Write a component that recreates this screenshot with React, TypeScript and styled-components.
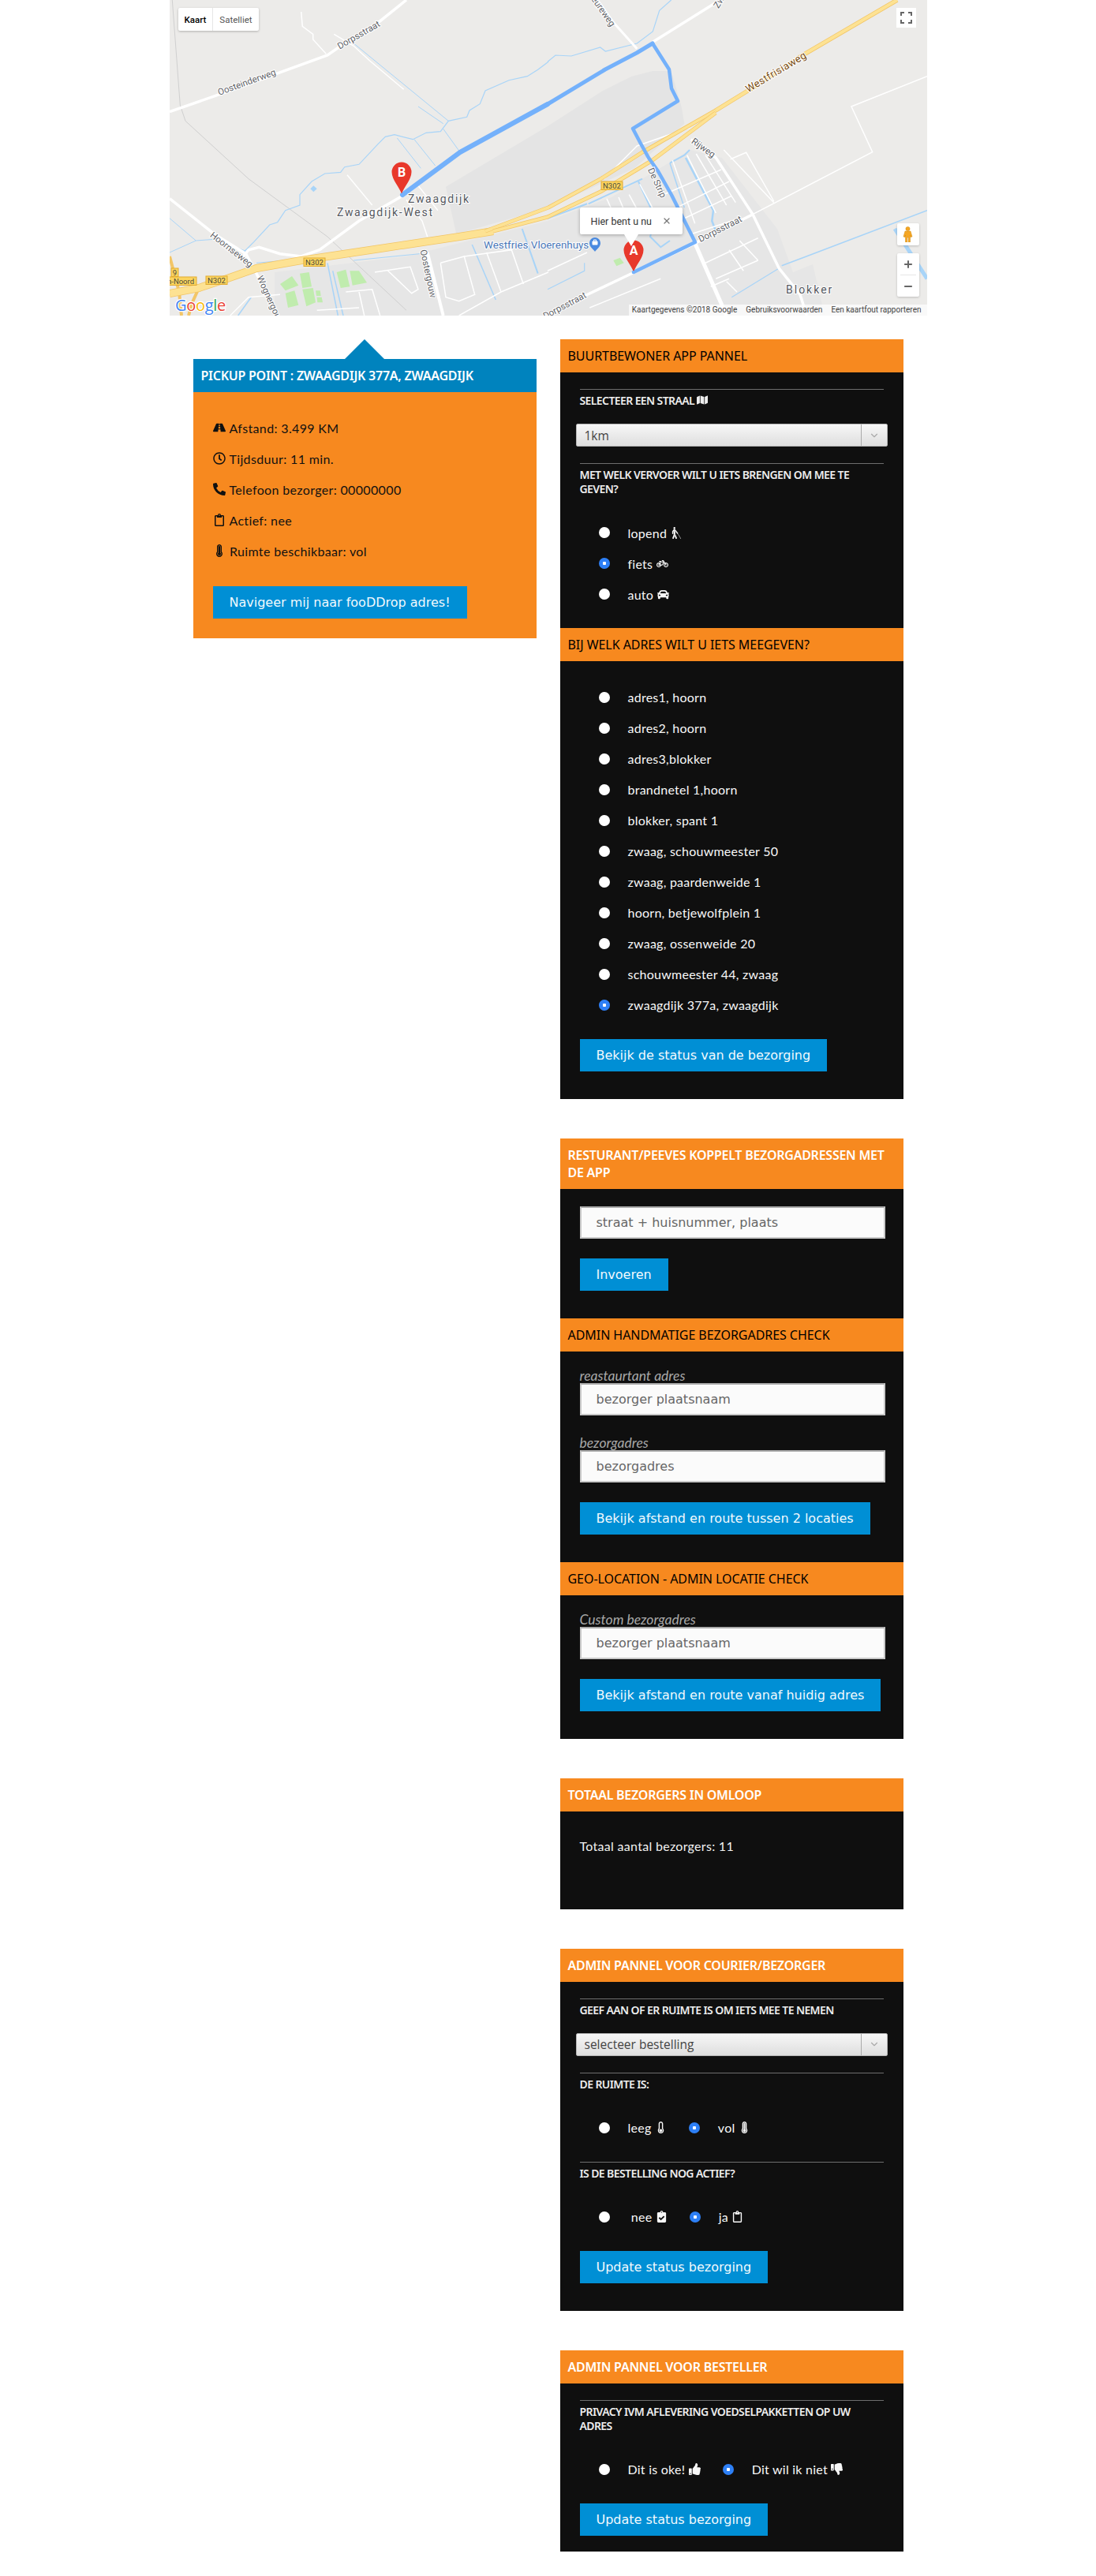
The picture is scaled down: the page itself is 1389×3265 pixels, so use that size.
import React from 'react'
import styled, { createGlobalStyle } from 'styled-components'
import {
  FaBicycle,
  FaBlind,
  FaCar,
  FaClipboardCheck,
  FaMap,
  FaPhoneAlt,
  FaRegClipboard,
  FaRegClock,
  FaRoad,
  FaThermometerEmpty,
  FaThermometerFull,
  FaThumbsDown,
  FaThumbsUp
} from 'react-icons/fa'
import { ChevronDown, Minus, Plus, X } from 'lucide-react'

const ORANGE = '#f7891f'
const BLUE = '#008fd5'
const PANEL = '#0f0f0f'
const BODY_FONT = '"Lato", "Open Sans", sans-serif'
const HEAD_FONT = '"Noto Sans", "Open Sans", sans-serif'
const BUTTON_FONT = '"DejaVu Sans", "Liberation Sans", sans-serif'
const MAP_FONT = 'Roboto, "Liberation Sans", sans-serif'

const GlobalStyle = createGlobalStyle`
  html, body {
    margin: 0;
    padding: 0;
    background: #fff;
  }
  * {
    box-sizing: border-box;
  }
`

// map data was measured on two 3x crops of the map, so points go through these
const convert = (points: string, offset: number) =>
  points
    .split(' ')
    .map(p => {
      const [x, y] = p.split(',').map(Number)
      return `${(x / 3 + offset).toFixed(1)},${(y / 3).toFixed(1)}`
    })
    .join(' ')
const L = (points: string) => convert(points, 0)
const R = (points: string) => convert(points, 479)

const whiteRoads: [string, number][] = [
  [L('0,425 200,355 600,210 650,175 800,80 900,0'), 3.5],
  [L('0,755 170,890 290,965 330,1040 410,1200'), 3.5],
  [L('885,745 720,840 570,950 500,975 420,965 340,940 300,950 280,975'), 3.5],
  [R('400,160 640,10 660,0'), 3.5],
  [R('190,0 250,85 340,185'), 3],
  [R('0,1200 130,1130 330,1035 560,925 780,815'), 3.5],
  [R('545,530 640,600 780,815 880,1020 960,1120 985,1200'), 3.5],
  [R('560,925 680,1200'), 5],
  [L('980,960 1040,1200'), 4]
]

const thinRoads: string[] = [
  L('500,45 505,100 545,130 545,150 595,205'),
  L('625,130 700,175 760,230 890,340'),
  L('675,665 770,780'),
  L('900,760 960,840 980,900'),
  L('940,700 1020,800'),
  L('1030,1000 1120,975 1160,1120 1100,1145 1050,1130 1030,1000'),
  L('780,1035 915,1015 945,1100 920,1115 830,1030'),
  L('1120,975 1300,950 1345,1080'),
  L('1100,1200 1260,1110 1440,1035'),
  L('670,1110 770,1100 800,1200'),
  L('720,1110 740,1200'),
  L('560,1180 720,1170'),
  L('230,1200 300,1130 420,1120'),
  L('1205,960 1260,1110'),
  R('780,815 1235,578 1155,405 1443,290'),
  R('475,610 560,850'),
  R('530,590 640,810'),
  R('565,585 680,780'),
  R('600,590 715,770'),
  R('440,740 660,645'),
  R('490,790 690,690'),
  R('520,830 700,745'),
  R('545,890 730,830'),
  R('225,755 280,880'),
  R('270,750 330,890'),
  R('310,740 375,860'),
  R('350,700 420,830'),
  R('600,1000 800,905'),
  R('640,1060 800,990'),
  R('690,950 745,1030'),
  R('730,915 800,990'),
  R('160,1170 430,1060'),
  R('620,1090 690,1060'),
  R('680,1070 720,1110'),
  R('670,570 860,770'),
  R('695,605 755,580 860,765'),
  R('215,680 340,555 540,485'),
  R('0,1030 150,960')
]

const waterLines: [string, number][] = [
  [L('280,960 320,920 380,855 410,845 440,800 495,780 495,740 540,690 590,660 650,655 665,635 720,625 790,550 820,520 855,512 925,530 975,505 1030,500 1060,460 1130,445 1140,420 1180,395 1200,345 1290,305 1360,290 1400,265 1440,235'), 1.2],
  [R('0,235 30,210 90,213 200,180 220,195 340,165 400,120 425,40 470,0'), 1.2],
  [L('700,165 1060,460'), 1],
  [L('945,405 1040,470'), 1],
  [L('1040,490 1105,580'), 1],
  [L('865,525 955,640'), 1],
  [L('930,530 1010,630'), 1],
  [L('0,960 100,915 170,910 290,955'), 1],
  [L('0,830 100,915'), 1],
  [L('600,1000 640,1200'), 1.5],
  [L('1150,930 1240,1140'), 1.5],
  [L('1340,870 1400,1040'), 2],
  [L('330,1000 500,985'), 1],
  [L('700,990 950,965'), 1],
  [L('310,1130 260,1200'), 1.5],
  [L('620,1030 660,1200'), 1.5],
  [R('890,1010 970,980 1443,800'), 1.5],
  [R('1320,870 1443,1060'), 5],
  [R('700,1130 880,1020'), 1.2],
  [R('465,620 520,590 540,570'), 2],
  [R('465,620 520,790'), 1.5],
  [R('525,600 630,800 625,840 640,880'), 2.5],
  [R('345,690 410,830 390,900 430,940 465,915'), 2],
  [R('155,775 360,680'), 2],
  [R('0,830 150,775'), 2],
  [R('0,1100 140,1030 140,1000'), 1.2],
  [R('640,600 780,815 880,1020'), 1]
]

const greenSpots: string[] = [
  L('420,1080 465,1050 490,1085 440,1105'),
  L('495,1040 530,1035 540,1090 505,1095'),
  L('440,1115 475,1105 490,1160 450,1170'),
  L('505,1100 545,1095 555,1150 520,1165'),
  L('555,1105 572,1105 575,1125 558,1125'),
  L('560,1130 578,1130 582,1150 562,1150'),
  L('635,1035 670,1025 685,1090 650,1095'),
  L('685,1030 720,1030 750,1075 695,1085'),
  R('250,990 275,980 290,1000 262,1012')
]

const mapLabels: { text: string; x: number; y: number; angle: number }[] = [
  { text: 'Oosteinderweg', x: 98, y: 105, angle: -20 },
  { text: 'Dorpsstraat', x: 240, y: 45, angle: -30 },
  { text: 'Hoornseweg', x: 78, y: 317, angle: 38 },
  { text: 'Wognergouw', x: 127, y: 381, angle: 66 },
  { text: 'Oostergouw', x: 327, y: 347, angle: 78 },
  { text: 'De Strip', x: 617, y: 232, angle: 65 },
  { text: 'Rijweg', x: 676, y: 188, angle: 35 },
  { text: 'Dorpsstraat', x: 698, y: 291, angle: -27 },
  { text: 'Dorpsstraat', x: 501, y: 388, angle: -28 },
  { text: 'eureweg', x: 549, y: 15, angle: 55 },
  { text: 'Zw', x: 697, y: 3, angle: -58 }
]

const shields: { text: string; x: number; y: number; w: number }[] = [
  { text: 'N302', x: 170, y: 327, w: 27 },
  { text: 'N302', x: 46, y: 350, w: 27 },
  { text: 'N302', x: 547, y: 230, w: 27 },
  { text: 'n-Noord', x: -6, y: 351, w: 40 },
  { text: '9', x: 2, y: 340, w: 9 }
]

const pinPath = (cx: number, cy: number) =>
  `M${cx} ${cy + 28}C${cx - 2} ${cy + 20} ${cx - 12.5} ${cy + 10} ${cx - 12.5} ${cy}A12.5 12.5 0 1 1 ${cx + 12.5} ${cy}C${cx + 12.5} ${cy + 10} ${cx + 2} ${cy + 20} ${cx} ${cy + 28}Z`

const addresses = [
  'adres1, hoorn',
  'adres2, hoorn',
  'adres3,blokker',
  'brandnetel 1,hoorn',
  'blokker, spant 1',
  'zwaag, schouwmeester 50',
  'zwaag, paardenweide 1',
  'hoorn, betjewolfplein 1',
  'zwaag, ossenweide 20',
  'schouwmeester 44, zwaag',
  'zwaagdijk 377a, zwaagdijk'
]

const RouteMap = () => (
  <MapFrame>
    <MapCanvas viewBox="0 0 960 400" width="960" height="400">
      <rect width="960" height="400" fill="#ecebe9" />
      <polygon
        fill="#e4e4e4"
        points={`${L('1050,710 1090,890 1440,790')} ${R('330,640 520,470 510,410 470,270 400,270 320,290 210,345 0,480')}`}
      />
      <polygon
        fill="#e6e6e6"
        points="133,345 300,325 479,280 560,250 660,190 700,200 770,290 790,345 815,335 830,400 133,400"
      />
      {greenSpots.map(p => (
        <polygon key={p} points={p} fill="#c0ecae" />
      ))}
      <polyline
        points={L('10,0 40,400 60,460 300,680 600,900 900,1180')}
        fill="none"
        stroke="#cfcfcf"
        strokeWidth="1"
      />
      {waterLines.map(([p, w]) => (
        <polyline key={p} points={p} fill="none" stroke="#a8d4f8" strokeWidth={w} />
      ))}
      <polygon points={L('535,718 547,706 560,718 547,730')} fill="#a8d4f8" />
      {thinRoads.map(p => (
        <polyline key={p} points={p} fill="none" stroke="#fff" strokeWidth="1.5" />
      ))}
      {whiteRoads.map(([p, w]) => (
        <polyline key={p} points={p} fill="none" stroke="#fff" strokeWidth={w} />
      ))}

      <g fill="none" strokeLinejoin="round">
        <polyline points="0,325 12,370 15,400" stroke="#f3c667" strokeWidth="4" />
        <polyline points="37,365 28,385 24,400" stroke="#f3c667" strokeWidth="4" />
        <polyline points="0,372 37,365 73,353 110,340 167,330 267,315 367,300 410,293" stroke="#f2c566" strokeWidth="10" />
        <polyline points="0,372 37,365 73,353 110,340 167,330 267,315 367,300 410,293" stroke="#fde293" strokeWidth="8.5" />
        <polyline points="400,293 480,263 546,227 599,193 692,140" stroke="#f2c566" strokeWidth="5" />
        <polyline points="400,293 480,263 546,227 599,193 692,140" stroke="#fde293" strokeWidth="3.6" />
        <polyline points="410,293 479,275 546,243 612,203 692,143" stroke="#f2c566" strokeWidth="5" />
        <polyline points="410,293 479,275 546,243 612,203 692,143" stroke="#fde293" strokeWidth="3.6" />
        <polyline points="692,140 736,113 802,70 922,0" stroke="#f2c566" strokeWidth="5.5" />
        <polyline points="692,140 736,113 802,70 922,0" stroke="#fde293" strokeWidth="4" />
      </g>

      <g fill="none" stroke="#74b1fb" strokeLinejoin="round" strokeLinecap="round">
        <polyline points="295,247 368,193 479,132" strokeWidth="6" />
        <polyline points="479,132 552,88 592,67 612,55" strokeWidth="5" />
        <polyline points="612,55 633,88 636,112 644,128 587,163 597,182 607,200 619,217 636,247 666,307 588,345" strokeWidth="4.5" />
      </g>

      <g fontFamily={MAP_FONT} fontSize="11.5" fill="#5f6368" stroke="#fff" strokeWidth="2" paintOrder="stroke" textAnchor="middle">
        {mapLabels.map(l => (
          <text
            key={`${l.text}${l.x}`}
            x={l.x}
            y={l.y}
            dominantBaseline="middle"
            transform={`rotate(${l.angle} ${l.x} ${l.y})`}
          >
            {l.text}
          </text>
        ))}
        <text
          x="769"
          y="92"
          fill="#7a4d12"
          fontSize="13"
          letterSpacing="0.4"
          dominantBaseline="middle"
          transform="rotate(-31 769 92)"
        >
          Westfrisiaweg
        </text>
      </g>

      <g fontFamily={MAP_FONT} fill="#55585e" stroke="#fff" strokeWidth="2" paintOrder="stroke" fontSize="14">
        <text x="302" y="257" letterSpacing="1.7">Zwaagdijk</text>
        <text x="212" y="274" letterSpacing="1.7">Zwaagdijk-West</text>
        <text x="781" y="372" letterSpacing="2">Blokker</text>
      </g>

      <text x="398" y="315" fontFamily={MAP_FONT} fontSize="13.4" fill="#4a77b8" stroke="#fff" strokeWidth="2" paintOrder="stroke">
        Westfries Vloerenhuys
      </text>
      <path d="M539 319c-2-3-7-6-7-11a7 7 0 0 1 14 0c0 5-5 8-7 11z" fill="#4a8ae0" />
      <rect x="535.5" y="305.5" width="7" height="5" rx="1" fill="#fff" />
      <path d="M537.5 305.5v-1.500h3v1.500" fill="none" stroke="#fff" />

      {shields.map(s => (
        <g key={`${s.text}${s.x}`}>
          <rect x={s.x} y={s.y} width={s.w} height="10.500" fill="#fbd45f" stroke="#e0aa30" />
          <text
            x={s.x + s.w / 2}
            y={s.y + 9}
            fontFamily={MAP_FONT}
            fontSize="9.500"
            textAnchor="middle"
            fill="#4a4a3a"
          >
            {s.text}
          </text>
        </g>
      ))}

      <path d={pinPath(294, 218)} fill="#e8382b" />
      <circle cx="295" cy="247" r="2.500" fill="#74b1fb" />
      <text x="294" y="224" fontFamily={MAP_FONT} fontWeight="700" fontSize="16" fill="#fff" textAnchor="middle">
        B
      </text>
      <path d={pinPath(588, 317)} fill="#e8382b" />
      <circle cx="588" cy="345" r="2" fill="#74b1fb" />
      <text x="588" y="323" fontFamily={MAP_FONT} fontWeight="700" fontSize="16" fill="#fff" textAnchor="middle">
        A
      </text>

      <text x="7" y="394" fontFamily='"Open Sans", sans-serif' fontSize="20" stroke="#fff" strokeWidth="2.500" paintOrder="stroke" letterSpacing="-0.3">
        <tspan fill="#4285f4">G</tspan>
        <tspan fill="#ea4335">o</tspan>
        <tspan fill="#fbbc05">o</tspan>
        <tspan fill="#4285f4">g</tspan>
        <tspan fill="#34a853">l</tspan>
        <tspan fill="#ea4335">e</tspan>
      </text>
    </MapCanvas>

    <MapTypeToggle>
      <MapTypeOption $active>Kaart</MapTypeOption>
      <MapTypeOption>Satelliet</MapTypeOption>
    </MapTypeToggle>

    <FullscreenButton>
      <svg width="15" height="15" viewBox="0 0 15 15" fill="none" stroke="#666" strokeWidth="2">
        <path d="M1 5V1h4M10 1h4v4M14 10v4h-4M5 14H1v-4" />
      </svg>
    </FullscreenButton>

    <InfoPopup>
      Hier bent u nu
      <X size={12} color="#777" strokeWidth={2.5} />
    </InfoPopup>

    <PegmanButton>
      <svg width="13" height="20" viewBox="0 0 13 20" fill="#f5a623" stroke="#d18a10" strokeWidth="0.5">
        <circle cx="6.500" cy="3" r="2.600" />
        <path d="M3 6h7l2 7-2 .5-.5-2.500V20H7.200v-6H5.800v6H3.500v-9L3 13.500 1 13z" />
      </svg>
    </PegmanButton>

    <ZoomControl>
      <ZoomStep>
        <Plus size={14} color="#666" strokeWidth={3.5} />
      </ZoomStep>
      <ZoomDivider />
      <ZoomStep>
        <Minus size={14} color="#666" strokeWidth={3.5} />
      </ZoomStep>
    </ZoomControl>

    <Attribution>
      <span>Kaartgegevens ©2018 Google</span>
      <span>Gebruiksvoorwaarden</span>
      <span>Een kaartfout rapporteren</span>
    </Attribution>
  </MapFrame>
)

const Choice = ({
  checked,
  name,
  children
}: {
  checked?: boolean
  name: string
  children: React.ReactNode
}) => (
  <ChoiceLabel>
    <Radio type="radio" name={name} defaultChecked={checked} />
    <span>{children}</span>
  </ChoiceLabel>
)

const StyledSelect = ({ value }: { value: string }) => (
  <SelectBox>
    <SelectField defaultValue={value}>
      <option>{value}</option>
    </SelectField>
    <SelectArrow>
      <ChevronDown size={14} color="#aaa" />
    </SelectArrow>
  </SelectBox>
)

export default function App() {
  return (
    <>
      <GlobalStyle />
      <RouteMap />
      <Columns>
        <PickupCard>
          <PanelHeader $light $blue>
            Pickup point : Zwaagdijk 377a, Zwaagdijk
          </PanelHeader>
          <PickupBody>
            <InfoRow><FaRoad /> Afstand: 3.499 KM</InfoRow>
            <InfoRow><FaRegClock /> Tijdsduur: 11 min.</InfoRow>
            <InfoRow><FaPhoneAlt /> Telefoon bezorger: 00000000</InfoRow>
            <InfoRow><FaRegClipboard /> Actief: nee</InfoRow>
            <InfoRow><FaThermometerFull /> Ruimte beschikbaar: vol</InfoRow>
            <ActionButton>Navigeer mij naar fooDDrop adres!</ActionButton>
          </PickupBody>
        </PickupCard>

        <RightColumn>
          <Panel>
            <PanelHeader>Buurtbewoner app pannel</PanelHeader>
            <PanelBody $pad={23}>
              <Rule />
              <FieldTitle>
                Selecteer een straal <FaMap />
              </FieldTitle>
              <StyledSelect value="1km" />
              <Rule />
              <FieldTitle>Met welk vervoer wilt u iets brengen om mee te geven?</FieldTitle>
              <ChoiceList>
                <Choice name="transport">lopend <FaBlind /></Choice>
                <Choice name="transport" checked>fiets <FaBicycle /></Choice>
                <Choice name="transport">auto <FaCar /></Choice>
              </ChoiceList>
            </PanelBody>
            <PanelHeader>Bij welk adres wilt u iets meegeven?</PanelHeader>
            <PanelBody $pad={35}>
              <ChoiceList>
                {addresses.map((address, i) => (
                  <Choice key={address} name="address" checked={i === addresses.length - 1}>
                    {address}
                  </Choice>
                ))}
              </ChoiceList>
              <ActionButton>Bekijk de status van de bezorging</ActionButton>
            </PanelBody>
          </Panel>

          <Panel>
            <PanelHeader $light>Resturant/peeves koppelt bezorgadressen met de app</PanelHeader>
            <PanelBody $pad={35}>
              <TextField $first placeholder="straat + huisnummer, plaats" />
              <ActionButton>Invoeren</ActionButton>
            </PanelBody>
            <PanelHeader>Admin handmatige bezorgadres check</PanelHeader>
            <PanelBody $pad={35}>
              <FieldCaption $first>reastaurtant adres</FieldCaption>
              <TextField placeholder="bezorger plaatsnaam" />
              <FieldCaption>bezorgadres</FieldCaption>
              <TextField placeholder="bezorgadres" />
              <ActionButton>Bekijk afstand en route tussen 2 locaties</ActionButton>
            </PanelBody>
            <PanelHeader>Geo-location - admin locatie check</PanelHeader>
            <PanelBody $pad={35}>
              <FieldCaption $first>Custom bezorgadres</FieldCaption>
              <TextField placeholder="bezorger plaatsnaam" />
              <ActionButton>Bekijk afstand en route vanaf huidig adres</ActionButton>
            </PanelBody>
          </Panel>

          <Panel>
            <PanelHeader $light>Totaal bezorgers in omloop</PanelHeader>
            <PanelBody $pad={70}>
              <TotalLine>Totaal aantal bezorgers: 11</TotalLine>
            </PanelBody>
          </Panel>

          <Panel>
            <PanelHeader $light>Admin pannel voor courier/bezorger</PanelHeader>
            <PanelBody $pad={35}>
              <Rule />
              <FieldTitle>Geef aan of er ruimte is om iets mee te nemen</FieldTitle>
              <StyledSelect value="selecteer bestelling" />
              <Rule />
              <FieldTitle>De ruimte is:</FieldTitle>
              <ChoiceList $inline>
                <Choice name="space">leeg <FaThermometerEmpty /></Choice>
                <Choice name="space" checked>vol <FaThermometerFull /></Choice>
              </ChoiceList>
              <Rule />
              <FieldTitle>Is de bestelling nog actief?</FieldTitle>
              <ChoiceList $inline>
                <Choice name="active">&nbsp;nee <FaClipboardCheck /></Choice>
                <Choice name="active" checked>ja <FaRegClipboard /></Choice>
              </ChoiceList>
              <ActionButton>Update status bezorging</ActionButton>
            </PanelBody>
          </Panel>

          <Panel>
            <PanelHeader $light>Admin pannel voor besteller</PanelHeader>
            <PanelBody $pad={20}>
              <Rule />
              <FieldTitle>Privacy ivm aflevering voedselpakketten op uw adres</FieldTitle>
              <ChoiceList $inline>
                <Choice name="privacy">Dit is oke! <FaThumbsUp /></Choice>
                <Choice name="privacy" checked>Dit wil ik niet <FaThumbsDown /></Choice>
              </ChoiceList>
              <ActionButton>Update status bezorging</ActionButton>
            </PanelBody>
          </Panel>
        </RightColumn>
      </Columns>
    </>
  )
}

const MapFrame = styled.div`
  position: relative;
  width: 960px;
  height: 400px;
  margin: 0 auto;
  overflow: hidden;
  font-family: ${MAP_FONT};
`

const MapCanvas = styled.svg`
  display: block;
`

const MapTypeToggle = styled.div`
  position: absolute;
  top: 10px;
  left: 11px;
  display: flex;
  height: 29px;
  background: #fff;
  border-radius: 2px;
  box-shadow: 0 1px 3px rgba(0, 0, 0, 0.25);
`

const MapTypeOption = styled.div<{ $active?: boolean }>`
  display: flex;
  align-items: center;
  padding: 0 8px;
  font-size: 11.500px;
  color: ${props => (props.$active ? '#000' : '#565656')};
  font-weight: ${props => (props.$active ? 500 : 400)};
  border-right: ${props => (props.$active ? '1px solid #e6e6e6' : 'none')};
`

const FullscreenButton = styled.div`
  position: absolute;
  top: 10px;
  right: 14px;
  display: flex;
  align-items: center;
  justify-content: center;
  width: 25px;
  height: 25px;
  background: #fff;
`

const InfoPopup = styled.div`
  position: absolute;
  top: 263px;
  left: 520px;
  display: flex;
  align-items: center;
  justify-content: space-between;
  width: 130px;
  height: 34px;
  padding: 0 14px;
  background: #fff;
  border-radius: 2px;
  box-shadow: 0 1px 4px rgba(0, 0, 0, 0.3);
  font-size: 12.500px;
  color: #333;

  &::after {
    content: '';
    position: absolute;
    top: 34px;
    left: 56px;
    border-left: 9px solid transparent;
    border-right: 9px solid transparent;
    border-top: 15px solid #fff;
  }
`

const PegmanButton = styled.div`
  position: absolute;
  top: 283px;
  right: 10px;
  display: flex;
  align-items: center;
  justify-content: center;
  width: 28px;
  height: 28px;
  background: #fff;
  border-radius: 2px;
  box-shadow: 0 1px 3px rgba(0, 0, 0, 0.2);
`

const ZoomControl = styled.div`
  position: absolute;
  top: 321px;
  right: 10px;
  width: 28px;
  height: 55px;
  padding: 0 4px;
  background: #fff;
  border-radius: 2px;
  box-shadow: 0 1px 3px rgba(0, 0, 0, 0.2);
`

const ZoomStep = styled.div`
  display: flex;
  align-items: center;
  justify-content: center;
  height: 27px;
`

const ZoomDivider = styled.div`
  height: 1px;
  background: #e6e6e6;
`

const Attribution = styled.div`
  position: absolute;
  right: 0;
  bottom: 0;
  display: flex;
  gap: 11px;
  height: 14px;
  padding: 0 7px 0 4px;
  background: rgba(255, 255, 255, 0.7);
  font-size: 10px;
  line-height: 14px;
  color: #444;
  white-space: nowrap;
`

const Columns = styled.div`
  display: grid;
  grid-template-columns: 435px 435px;
  justify-content: center;
  column-gap: 30px;
  align-items: start;
  padding: 30px 0;
`

const RightColumn = styled.div`
  display: flex;
  flex-direction: column;
  gap: 50px;
`

const PickupCard = styled.section`
  position: relative;
  margin-top: 25px;

  &::before {
    content: '';
    position: absolute;
    top: -25px;
    left: 192px;
    border-left: 25px solid transparent;
    border-right: 25px solid transparent;
    border-bottom: 25px solid #0083be;
  }
`

const PanelHeader = styled.h3<{ $light?: boolean; $blue?: boolean }>`
  margin: 0;
  padding: 10px 10px;
  background: ${props => (props.$blue ? '#0083be' : ORANGE)};
  color: ${props => (props.$light ? '#fff' : '#000')};
  font-family: ${HEAD_FONT};
  font-size: 16px;
  font-weight: ${props => (props.$light ? 600 : 400)};
  line-height: 22px;
  text-transform: uppercase;
  letter-spacing: ${props => (props.$light ? '-0.25px' : '-0.05px')};
`

const PickupBody = styled.div`
  padding: 25.500px 25px 25px;
  background: ${ORANGE};
`

const InfoRow = styled.p`
  display: flex;
  align-items: center;
  gap: 1px;
  height: 39px;
  margin: 0;
  font-family: ${BODY_FONT};
  font-size: 16px;
  color: #111;
  white-space: pre;
  letter-spacing: 0.35px;

  svg {
    font-size: 16px;
    flex: none;
  }
`

const ActionButton = styled.button`
  display: block;
  height: 41px;
  margin: 25px 0 0;
  padding: 0 21px;
  border: none;
  border-radius: 0;
  background: ${BLUE};
  color: #f2f9fd;
  font-family: ${BUTTON_FONT};
  font-size: 16px;
  white-space: nowrap;
`

const Panel = styled.section`
  background: ${PANEL};
`

const PanelBody = styled.div<{ $pad: number }>`
  padding: 0 25px ${props => props.$pad}px;
`

const Rule = styled.hr`
  height: 1px;
  margin: 21px 0 0;
  border: none;
  background: #6e6e6e;
`

const FieldTitle = styled.h4`
  margin: 5px 0 0;
  font-family: ${HEAD_FONT};
  font-size: 14px;
  font-weight: 600;
  line-height: 18px;
  color: #eee;
  text-transform: uppercase;
  letter-spacing: -0.6px;

  svg {
    vertical-align: -1px;
  }
`

const SelectBox = styled.div`
  display: flex;
  width: 395px;
  height: 29px;
  margin: 20px 0 0 -5px;
  border: 1px solid #b5b5b5;
  border-radius: 2px;
  background: linear-gradient(#f7f7f7, #dedede);
`

const SelectField = styled.select`
  flex: 1;
  min-width: 0;
  padding: 0 10px;
  border: none;
  outline: none;
  appearance: none;
  background: transparent;
  font-family: "Open Sans", sans-serif;
  font-size: 15.500px;
  color: #444;
`

const SelectArrow = styled.div`
  display: flex;
  align-items: center;
  justify-content: center;
  width: 33px;
  border-left: 1px solid #aaa;
`

const ChoiceList = styled.div<{ $inline?: boolean }>`
  display: flex;
  flex-direction: ${props => (props.$inline ? 'row' : 'column')};
  gap: ${props => (props.$inline ? '28px' : '0')};
  margin-top: 26.500px;
  padding-left: 24px;

  & + hr,
  & + button {
    margin-top: 23.500px;
  }
`

const ChoiceLabel = styled.label`
  display: flex;
  align-items: center;
  gap: 23px;
  height: 39px;
  font-family: ${BODY_FONT};
  font-size: 16px;
  color: #f8f8f8;
  white-space: pre;
  letter-spacing: 0.25px;

  span {
    display: flex;
    align-items: center;
    white-space: pre;
  }

  svg {
    font-size: 15px;
  }
`

const Radio = styled.input`
  appearance: none;
  flex: none;
  width: 14px;
  height: 14px;
  margin: 0;
  border-radius: 50%;
  background: #fff;

  &:checked {
    background: radial-gradient(circle, #fff 0 2px, #2d7ff5 2.500px);
  }
`

const TextField = styled.input<{ $first?: boolean }>`
  display: block;
  width: 387px;
  height: 41px;
  margin-top: ${props => (props.$first ? '22px' : '0')};
  padding: 0 19px;
  border: 2px solid #c9c9c9;
  border-top-color: #aaa;
  border-radius: 0;
  outline: none;
  background: #fbfbfb;
  font-family: ${BUTTON_FONT};
  font-size: 16px;

  &::placeholder {
    color: #666;
    opacity: 1;
  }
`

const FieldCaption = styled.label<{ $first?: boolean }>`
  display: block;
  height: 19px;
  margin-top: ${props => (props.$first ? '21px' : '25px')};
  font-family: ${BODY_FONT};
  font-size: 17.500px;
  font-style: italic;
  line-height: 19px;
  color: #a8a8a8;
`

const TotalLine = styled.p`
  margin: 34px 0 0;
  font-family: ${BODY_FONT};
  font-size: 16px;
  line-height: 20px;
  letter-spacing: 0.3px;
  color: #f2f2f2;
`
